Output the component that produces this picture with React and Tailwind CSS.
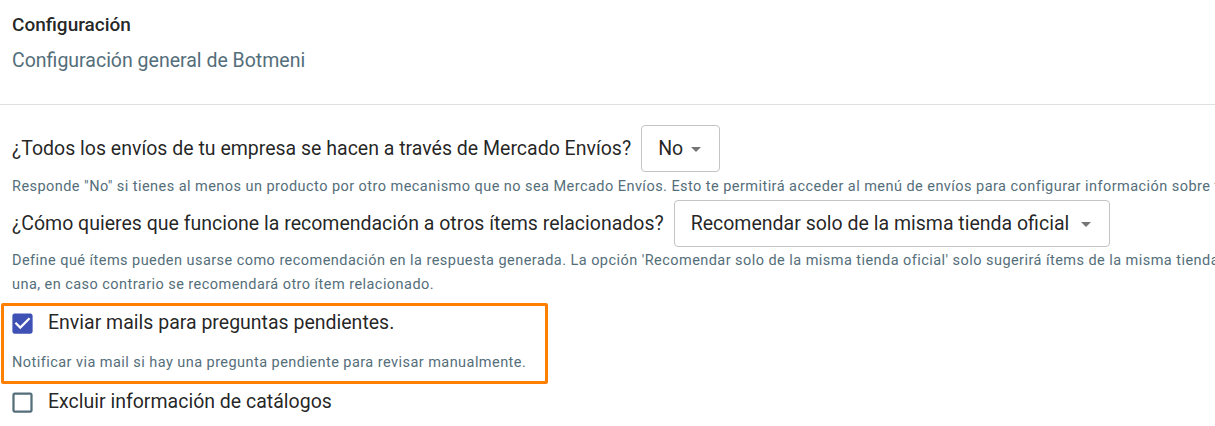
import React from "react";

const font = { fontFamily: "Roboto, 'Noto Sans', sans-serif" };

function Arrow() {
  return (
    <svg width="24" height="24" viewBox="0 0 24 24" className="shrink-0">
      <path d="M7 10l5 5 5-5z" fill="rgba(0,0,0,0.54)" />
    </svg>
  );
}

function Select({ value, w }) {
  return (
    <div
      className={`flex items-center justify-between h-[47px] rounded-[4px] border border-[#c4c4c4] pl-4 pr-[11px] shrink-0 ${w}`}
    >
      <span className="text-[19.5px] leading-[24px] text-[rgba(0,0,0,0.87)] whitespace-nowrap">{value}</span>
      <Arrow />
    </div>
  );
}

function CheckedBox() {
  return (
    <svg width="27" height="27" viewBox="0 0 24 24" className="shrink-0">
      <path
        fill="#3f51b5"
        d="M19 3H5c-1.11 0-2 .9-2 2v14c0 1.1.89 2 2 2h14c1.11 0 2-.9 2-2V5c0-1.1-.89-2-2-2zm-9 14l-5-5 1.41-1.41L10 14.17l7.59-7.59L19 8l-9 9z"
      />
    </svg>
  );
}

function EmptyBox() {
  return (
    <svg width="27" height="27" viewBox="0 0 24 24" className="shrink-0">
      <path
        fill="#546e7a"
        d="M19 5v14H5V5h14m0-2H5c-1.1 0-2 .9-2 2v14c0 1.1.9 2 2 2h14c1.1 0 2-.9 2-2V5c0-1.1-.9-2-2-2z"
      />
    </svg>
  );
}

const help = "text-[14.5px] leading-[24px] tracking-[0.45px] text-[#546e7a] whitespace-nowrap";
const q = "text-[19.5px] leading-[24px] text-[rgba(0,0,0,0.87)] whitespace-nowrap";

export default function App() {
  return (
    <div className="w-full h-[426px] overflow-hidden bg-white" style={font}>
      <div className="px-3 pt-[13px] pb-[31px]">
        <div className="text-[19px] leading-[24px] font-medium text-[rgba(0,0,0,0.87)]">Configuración</div>
        <div className="mt-3 text-[19.5px] leading-[24px] text-[#546e7a]">Configuración general de Botmeni</div>
      </div>
      <div className="h-px bg-[#e0e0e0] w-full" />
      <div className="px-3 pt-5">
        <div className="flex items-center gap-[10px]">
          <span className={q}>¿Todos los envíos de tu empresa se hacen a través de Mercado Envíos?</span>
          <Select value="No" w="w-[79px]" />
        </div>
        <div className={`${help} mt-[3px]`}>
          Responde "No" si tienes al menos un producto por otro mecanismo que no sea Mercado Envíos. Esto te permitirá acceder al menú de envíos para configurar información sobre tus envíos.
        </div>
        <div className="flex items-center gap-[10px] mt-px">
          <span className={q}>¿Cómo quieres que funcione la recomendación a otros ítems relacionados?</span>
          <Select value="Recomendar solo de la misma tienda oficial" w="w-[436px]" />
        </div>
        <div className={`${help} mt-[2px]`}>
          Define qué ítems pueden usarse como recomendación en la respuesta generada. La opción 'Recomendar solo de la misma tienda oficial' solo sugerirá ítems de la misma tienda oficial si hay
          <br />
          una, en caso contrario se recomendará otro ítem relacionado.
        </div>
        <div className="mt-[6px] -ml-[11px] w-[547px] border-[3px] border-[#ff8000] rounded-[2px] pb-[6px]">
          <div className="flex items-center h-[34px] pl-[5px] gap-3">
            <CheckedBox />
            <span className={q}>Enviar mails para preguntas pendientes.</span>
          </div>
          <div className={`${help} mt-[11px] pl-2`}>
            Notificar via mail si hay una pregunta pendiente para revisar manualmente.
          </div>
        </div>
        <div className="flex items-center h-[34px] -ml-[3px] gap-3 mt-px">
          <EmptyBox />
          <span className={q}>Excluir información de catálogos</span>
        </div>
      </div>
    </div>
  );
}
